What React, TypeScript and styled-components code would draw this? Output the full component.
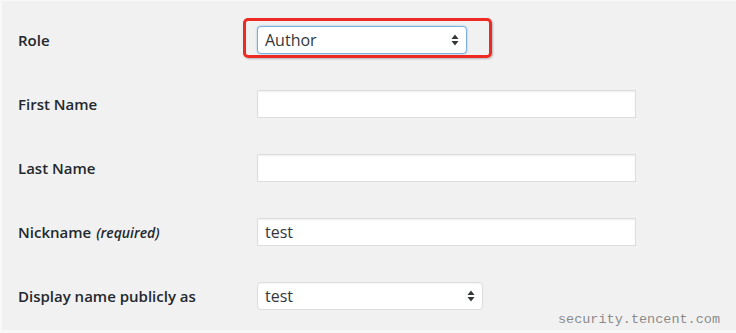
import React, { FC } from 'react'
import styled, { createGlobalStyle } from 'styled-components'

const GlobalStyle = createGlobalStyle`
    html, body {
        margin: 0;
        padding: 0;
        background: #f8f8f8;
    }
    body {
        font-family: "Open Sans", "Noto Sans", sans-serif;
        color: #23282d;
    }
`

const Frame = styled.div`
    position: relative;
    box-sizing: border-box;
    margin-left: 2px;
    margin-top: 1px;
    width: 734px;
    height: 329px;
    background: #f1f1f1;
    overflow: hidden;
`

const FormTable = styled.div`
    display: grid;
    grid-template-columns: 239px 1fr;
    grid-auto-rows: 64px;
    padding: 7px 0 0 16px;
`

const Label = styled.div`
    display: flex;
    align-items: center;
    font-size: 15px;
    font-weight: 600;
    color: #23282d;
`

const Note = styled.em`
    font-size: 14px;
    font-weight: 600;
    margin-left: 5px;
`

const Field = styled.div`
    display: flex;
    align-items: center;
`

const TextInput = styled.div<{ width: number }>`
    box-sizing: border-box;
    width: ${p => p.width}px;
    height: 28px;
    background: #fff;
    border: 1px solid #ddd;
    box-shadow: inset 0 1px 2px rgba(0, 0, 0, 0.07);
    padding: 0 7px;
    display: flex;
    align-items: center;
    font-size: 16px;
    color: #32373c;
`

const Select = styled.div<{ width: number; focused?: boolean }>`
    position: relative;
    box-sizing: border-box;
    width: ${p => p.width}px;
    height: 28px;
    background: #fff;
    border: 1px solid ${p => (p.focused ? '#7eb0de' : '#ddd')};
    border-radius: 4px;
    box-shadow: ${p => (p.focused ? '0 0 2px rgba(30, 140, 190, 0.5)' : 'inset 0 1px 2px rgba(0,0,0,0.04)')};
    padding: 0 7px;
    display: flex;
    align-items: center;
    justify-content: space-between;
    font-size: 16px;
    color: #32373c;
`

const Highlight = styled.div`
    position: absolute;
    left: -14px;
    top: -8px;
    width: 249px;
    height: 40px;
    box-sizing: border-box;
    border: 3px solid #ee2a24;
    border-radius: 5px;
    box-shadow: 1px 1px 2px rgba(0, 0, 0, 0.25);
    pointer-events: none;
`

const RoleCell = styled.div`
    position: relative;
    display: flex;
    align-items: center;
`

const Watermark = styled.div`
    position: absolute;
    right: 16px;
    bottom: 3px;
    font-family: "Liberation Mono", "DejaVu Sans Mono", monospace;
    font-size: 13.5px;
    color: #888;
    text-shadow: 0 0 1px #fff;
`

const Arrows: FC = () => (
    <svg width="8" height="12" viewBox="0 0 8 12">
        <path d="M4 0.5 L7.5 5 H0.5 Z" fill="#32373c" />
        <path d="M4 11.5 L7.5 7 H0.5 Z" fill="#32373c" />
    </svg>
)

const App: FC = () => (
    <>
        <GlobalStyle />
        <Frame>
            <FormTable>
                <Label>Role</Label>
                <Field>
                    <RoleCell>
                        <Select width={210} focused>
                            <span>Author</span>
                            <Arrows />
                        </Select>
                        <Highlight />
                    </RoleCell>
                </Field>

                <Label>First Name</Label>
                <Field>
                    <TextInput width={379} />
                </Field>

                <Label>Last Name</Label>
                <Field>
                    <TextInput width={379} />
                </Field>

                <Label>
                    Nickname<Note>(required)</Note>
                </Label>
                <Field>
                    <TextInput width={379}>test</TextInput>
                </Field>

                <Label>Display name publicly as</Label>
                <Field>
                    <Select width={226}>
                        <span>test</span>
                        <Arrows />
                    </Select>
                </Field>
            </FormTable>
            <Watermark>security.tencent.com</Watermark>
        </Frame>
    </>
)

export default App
